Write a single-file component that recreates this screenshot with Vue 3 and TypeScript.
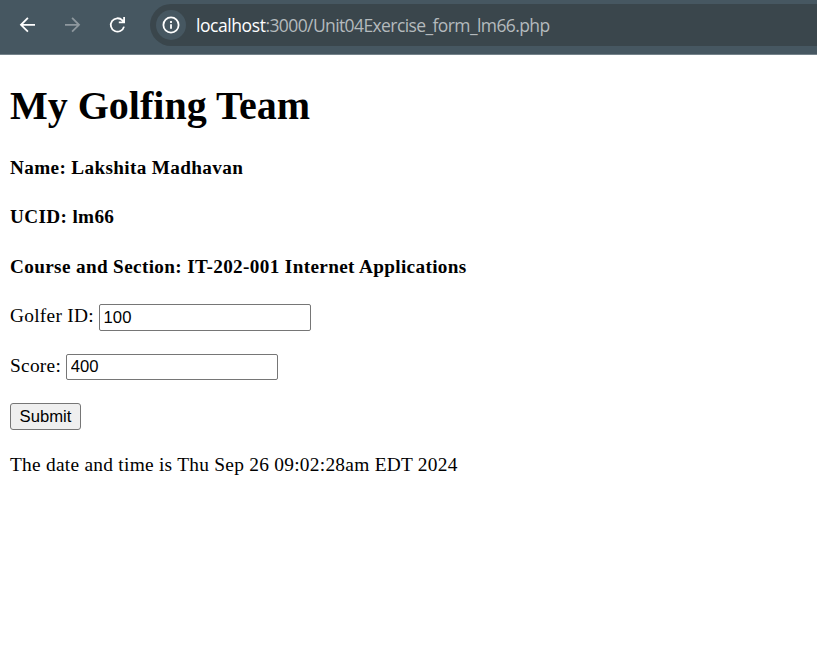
<script setup lang="ts">
import { ref } from 'vue'

const golferId = ref('100')
const score = ref('400')
</script>

<template>
  <div class="window">
    <header class="toolbar">
      <nav class="nav">
        <svg class="icon" viewBox="0 0 20 20"><path d="M17 9.8H3.6M9.9 2.9L3 9.8l6.9 6.9" /></svg>
        <svg class="icon dim" viewBox="0 0 20 20"><path d="M2 9.8h13.4M9.1 2.9l6.9 6.9-6.9 6.9" /></svg>
        <svg class="icon" viewBox="0 0 20 20"><path d="M16 11.6A6.7 6.7 0 1 1 14.4 5.4L15.9 7M16.1 2V7.4H10.8" /></svg>
      </nav>
      <div class="address">
        <span class="info">
          <svg class="icon" viewBox="0 0 20 20"><circle cx="10" cy="10" r="7.6" /><path d="M10 9.2v4.6M10 6v1.9" /></svg>
        </span>
        <span class="url"><span class="host">localhost</span><span class="path">:3000/Unit04Exercise_form_lm66.php</span></span>
      </div>
    </header>
    <main class="page">
      <h1>My Golfing Team</h1>
      <h4>Name: Lakshita Madhavan</h4>
      <h4 class="ucid">UCID: lm66</h4>
      <h4>Course and Section: IT-202-001 Internet Applications</h4>
      <form @submit.prevent>
        <div class="field"><label for="golfer">Golfer ID:</label><input id="golfer" v-model="golferId" type="text" /></div>
        <div class="field score"><label for="score">Score:</label><input id="score" v-model="score" type="text" /></div>
        <button type="submit">Submit</button>
      </form>
      <p>The date and time is Thu Sep 26 09:02:28am EDT 2024</p>
    </main>
  </div>
</template>

<style>
body {
  background: #fff;
}
</style>

<style scoped>
.window {
  height: 645px;
  overflow: hidden;
  background: #fff;
}
.toolbar {
  box-sizing: border-box;
  display: flex;
  height: 55px;
  padding-top: 4px;
  background: #465761;
  border-bottom: 1px solid #74828a;
}
.nav {
  display: flex;
  gap: 25px;
  width: 132px;
  padding: 11px 0 0 18px;
  flex: none;
}
.icon {
  display: block;
  width: 20px;
  height: 20px;
  flex: none;
  fill: none;
  stroke: #fff;
  stroke-width: 1.8;
}
.dim {
  stroke: #8e989e;
}
.address {
  display: flex;
  align-items: center;
  flex: 1;
  height: 42px;
  padding-left: 6px;
  background: #3a464c;
  border-radius: 21px 0 0 21px;
}
.info {
  display: flex;
  align-items: center;
  justify-content: center;
  width: 30px;
  height: 30px;
  border-radius: 50%;
  background: #465761;
}
.url {
  margin-left: 10px;
  font: 17.5px/24px "Open Sans", sans-serif;
  white-space: nowrap;
  color: #b4babd;
}
.host {
  color: #fff;
  letter-spacing: -0.43px;
}
.path {
  letter-spacing: -0.6px;
}
.page {
  padding: 28px 10px 0;
  color: #000;
  font: 19.4px/22px "Liberation Serif", serif;
}
h1 {
  margin: 0;
  font-size: 40px;
  line-height: 46px;
}
h4 {
  margin: 28px 0 0;
  font-size: 19.2px;
  line-height: 22px;
  letter-spacing: 0.36px;
}
.ucid {
  margin-top: 27px;
}
.field {
  display: flex;
  align-items: center;
  gap: 4.8px;
  height: 27px;
  margin-top: 26px;
}
.score {
  height: 26px;
  margin-top: 23px;
}
label {
  padding-bottom: 3px;
  letter-spacing: 0.25px;
}
input {
  box-sizing: border-box;
  width: 212px;
  height: 100%;
  margin: 0;
  padding: 1px 4px;
  border: 1px solid #767676;
  border-radius: 2px;
  background: #fff;
  color: #000;
  font: 16.67px "Liberation Sans", sans-serif;
}
button {
  display: block;
  box-sizing: border-box;
  width: 71px;
  height: 27px;
  margin: 23px 0 0;
  padding: 0;
  border: 1px solid #767676;
  border-radius: 3px;
  background: #efefef;
  color: #000;
  font: 16.67px "Liberation Sans", sans-serif;
}
p {
  margin: 24px 0 0;
  letter-spacing: 0.26px;
}
</style>
